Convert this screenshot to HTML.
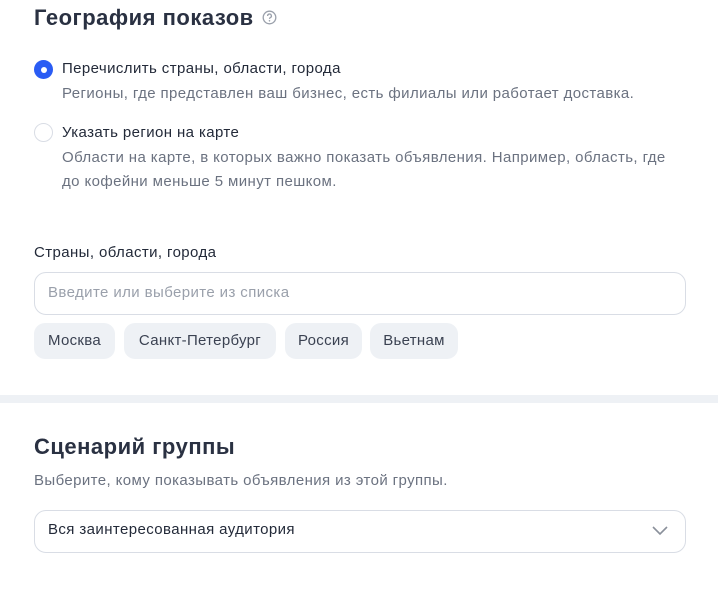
<!DOCTYPE html>
<html><head><meta charset="utf-8"><style>
*{box-sizing:border-box;margin:0;padding:0}
body{width:718px;height:558px;overflow:hidden;background:#eef1f5;font-family:"Liberation Sans",sans-serif;color:#232a39;position:relative}
.card{position:absolute;left:-20px;width:760px;background:#fff;border-radius:18px}
.t{position:absolute;white-space:nowrap}
.h{font-size:22px;font-weight:bold;color:#2a3142;letter-spacing:0.5px}
.m{font-size:15px;color:#232a39;letter-spacing:0.4px}
.s{font-size:15px;color:#6b7280;letter-spacing:0.4px}
.box{position:absolute;left:34px;width:652px;height:43px;border:1px solid #d9dde5;border-radius:12px}
.chip{position:absolute;top:323px;height:36px;background:#eef1f5;border-radius:11px;font-size:15px;line-height:36px;text-align:center;color:#3b4252;letter-spacing:0.3px}
</style></head><body>
<div class="card" style="top:-20px;height:415px"></div>
<div class="card" style="top:403px;height:200px"></div>
<div class="t h" style="left:34px;top:5px">География показов</div>
<svg style="position:absolute;left:262px;top:10px" width="15" height="15" viewBox="0 0 15 15"><circle cx="7.5" cy="7.5" r="6.3" fill="none" stroke="#9aa0ab" stroke-width="1.3"/><path d="M5.6 6a1.9 1.9 0 1 1 2.6 1.7c-.5.3-.7.6-.7 1.2" fill="none" stroke="#9aa0ab" stroke-width="1.3"/><circle cx="7.5" cy="10.8" r=".8" fill="#9aa0ab"/></svg>
<div style="position:absolute;left:34px;top:60px;width:19px;height:19px;border-radius:50%;background:#2a5cf4"><div style="position:absolute;left:6.5px;top:6.5px;width:6px;height:6px;border-radius:50%;background:#fff"></div></div>
<div class="t m" style="left:62px;top:60px">Перечислить страны, области, города</div>
<div class="t s" style="left:62px;top:85px">Регионы, где представлен ваш бизнес, есть филиалы или работает доставка.</div>
<div style="position:absolute;left:34px;top:123px;width:19px;height:19px;border-radius:50%;border:1px solid #d9dde5"></div>
<div class="t m" style="left:62px;top:124px">Указать регион на карте</div>
<div class="t s" style="left:62px;top:149px">Области на карте, в которых важно показать объявления. Например, область, где</div>
<div class="t s" style="left:62px;top:173px">до кофейни меньше 5 минут пешком.</div>
<div class="t m" style="left:34px;top:244px">Страны, области, города</div>
<div class="box" style="top:272px"></div>
<div class="t s" style="left:48px;top:284px;color:#9aa0ab">Введите или выберите из списка</div>
<div class="chip" style="left:34px;width:81px">Москва</div>
<div class="chip" style="left:124px;width:152px">Санкт-Петербург</div>
<div class="chip" style="left:285px;width:77px">Россия</div>
<div class="chip" style="left:370px;width:88px">Вьетнам</div>
<div class="t h" style="left:34px;top:434px">Сценарий группы</div>
<div class="t s" style="left:34px;top:472px">Выберите, кому показывать объявления из этой группы.</div>
<div class="box" style="top:510px"></div>
<div class="t m" style="left:48px;top:521px">Вся заинтересованная аудитория</div>
<svg style="position:absolute;left:651px;top:524px" width="18" height="12" viewBox="0 0 18 12"><path d="M2 3l7 7 7-7" fill="none" stroke="#8a909b" stroke-width="1.6"/></svg>
</body></html>
